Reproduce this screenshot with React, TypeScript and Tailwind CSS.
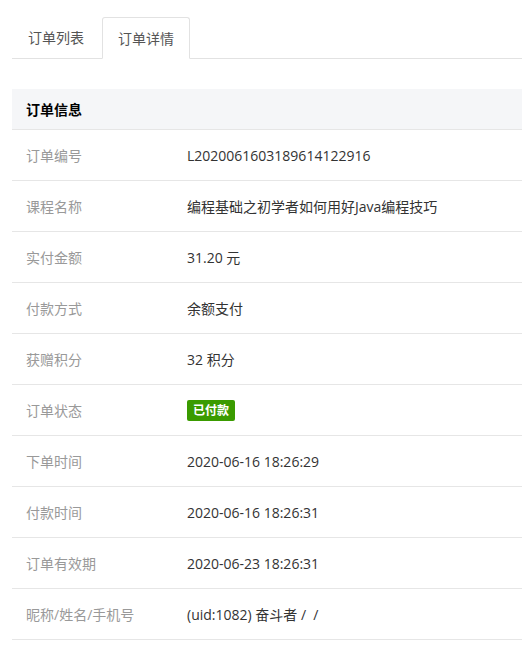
import { useState } from "react";

const rows: { label: string; value: string; badge?: boolean }[] = [
  { label: "订单编号", value: "L2020061603189614122916" },
  { label: "课程名称", value: "编程基础之初学者如何用好Java编程技巧" },
  { label: "实付金额", value: "31.20 元" },
  { label: "付款方式", value: "余额支付" },
  { label: "获赠积分", value: "32 积分" },
  { label: "订单状态", value: "已付款", badge: true },
  { label: "下单时间", value: "2020-06-16 18:26:29" },
  { label: "付款时间", value: "2020-06-16 18:26:31" },
  { label: "订单有效期", value: "2020-06-23 18:26:31" },
  { label: "昵称/姓名/手机号", value: "(uid:1082) 奋斗者 /  /" },
];

export default function App() {
  const [tab, setTab] = useState(1);
  const tabs = ["订单列表", "订单详情"];

  return (
    <div
      className="min-h-screen bg-white pl-[12px] text-[14px] text-[#333]"
      style={{ fontFamily: '"Open Sans", "Noto Sans CJK SC", sans-serif' }}
    >
      {/* Tabs */}
      <div className="flex pt-[17px] border-b border-[#e2e2e2] h-[59px]">
        {tabs.map((t, i) => (
          <button
            key={t}
            onClick={() => setTab(i)}
            className={
              i === tab
                ? "w-[88px] h-[42px] ml-[2px] -mb-px flex items-center justify-center bg-white border border-[#e2e2e2] border-b-white rounded-t-[3px] text-[#555]"
                : "w-[88px] h-[41px] flex items-center justify-center text-[#555]"
            }
          >
            {t}
          </button>
        ))}
      </div>

      {/* Order info */}
      <div className="mt-[30px]">
        <div className="h-[41px] flex items-center pl-[14px] bg-[#f5f6f8] border-b border-[#e6e6e6] font-bold text-black">
          订单信息
        </div>
        {rows.map((r) => (
          <div key={r.label} className="flex items-center h-[51px] border-b border-[#e6e6e6]">
            <div className="w-[161px] pl-[14px] text-[#999]">{r.label}</div>
            <div className="pl-[14px] whitespace-pre">
              {r.badge ? (
                <span className="inline-flex items-center h-[21px] px-[6px] rounded-[2px] bg-[#3a9b00] text-white text-[12px] font-bold">
                  {r.value}
                </span>
              ) : (
                r.value
              )}
            </div>
          </div>
        ))}
      </div>
    </div>
  );
}
